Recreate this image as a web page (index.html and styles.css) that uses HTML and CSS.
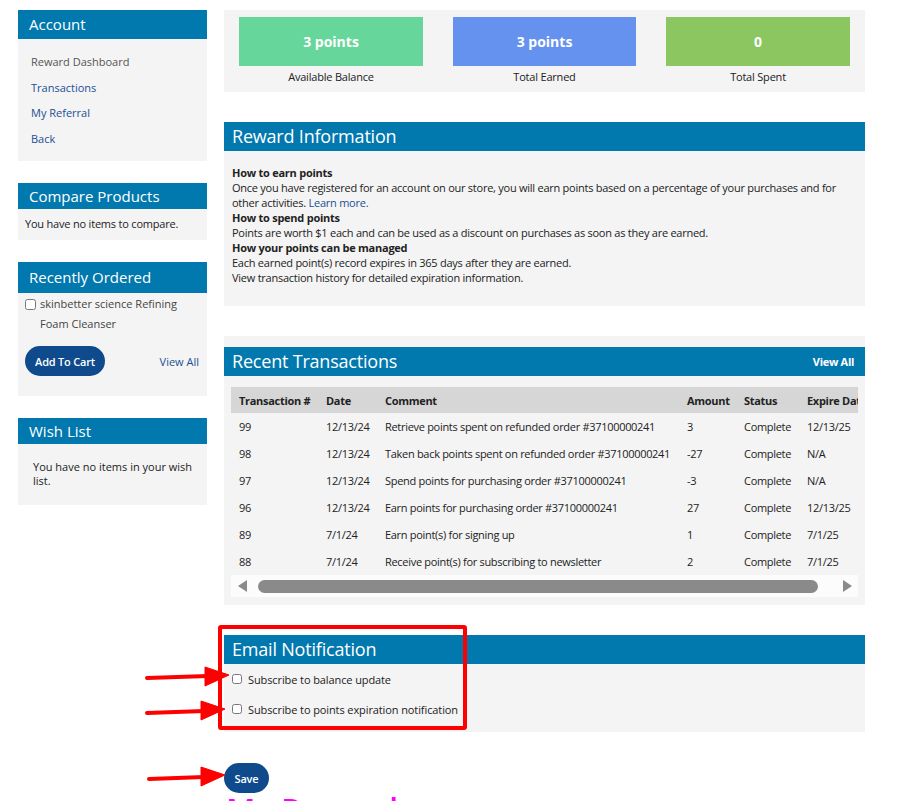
FILE: index.html
```html
<!DOCTYPE html>
<html lang="en">

<head>
    <meta charset="UTF-8">
    <meta name="viewport" content="width=device-width, initial-scale=1.0">
    <title>My Rewards</title>
    <link rel="stylesheet" href="styles.css">
</head>

<body>
    <div class="page">
        <!-- sidebar -->
        <div class="sidebar">
            <div class="block">
                <div class="block-title big">Account</div>
                <ul class="nav">
                    <li class="current">Reward Dashboard</li>
                    <li><a href="#">Transactions</a></li>
                    <li><a href="#">My Referral</a></li>
                    <li><a href="#">Back</a></li>
                </ul>
            </div>
            <div class="block">
                <div class="block-title">Compare Products</div>
                <div class="block-body compare">You have no items to compare.</div>
            </div>
            <div class="block">
                <div class="block-title tall">Recently Ordered</div>
                <div class="block-body ordered">
                    <label class="item"><input type="checkbox"><span>skinbetter science Refining Foam Cleanser</span></label>
                    <div class="actions">
                        <button class="btn">Add To Cart</button>
                        <a href="#">View All</a>
                    </div>
                </div>
            </div>
            <div class="block">
                <div class="block-title">Wish List</div>
                <div class="block-body wish">You have no items in your wish list.</div>
            </div>
        </div>

        <!-- main content -->
        <div class="main">
            <div class="stats">
                <div class="stat">
                    <div class="stat-box green">3 points</div>
                    <div class="stat-label">Available Balance</div>
                </div>
                <div class="stat">
                    <div class="stat-box blue">3 points</div>
                    <div class="stat-label">Total Earned</div>
                </div>
                <div class="stat">
                    <div class="stat-box lime">0</div>
                    <div class="stat-label">Total Spent</div>
                </div>
            </div>

            <div class="panel">
                <div class="panel-title">Reward Information</div>
                <div class="panel-body info">
                    <strong>How to earn points</strong>
                    <p>Once you have registered for an account on our store, you will earn points based on a percentage of your purchases and for other activities. <a href="#">Learn more.</a></p>
                    <strong>How to spend points</strong>
                    <p>Points are worth $1 each and can be used as a discount on purchases as soon as they are earned.</p>
                    <strong>How your points can be managed</strong>
                    <p>Each earned point(s) record expires in 365 days after they are earned.<br>View transaction history for detailed expiration information.</p>
                </div>
            </div>

            <div class="panel trans">
                <div class="panel-title">Recent Transactions <a href="#" class="view-all">View All</a></div>
                <div class="table-wrap">
                    <div class="table-clip">
                        <table>
                            <thead>
                                <tr>
                                    <th class="c1">Transaction #</th>
                                    <th class="c2">Date</th>
                                    <th class="c3">Comment</th>
                                    <th class="c4">Amount</th>
                                    <th class="c5">Status</th>
                                    <th class="c6">Expire Date</th>
                                </tr>
                            </thead>
                            <tbody>
                                <tr><td>99</td><td>12/13/24</td><td>Retrieve points spent on refunded order #37100000241</td><td>3</td><td>Complete</td><td>12/13/25</td></tr>
                                <tr><td>98</td><td>12/13/24</td><td>Taken back points spent on refunded order #37100000241</td><td>-27</td><td>Complete</td><td>N/A</td></tr>
                                <tr><td>97</td><td>12/13/24</td><td>Spend points for purchasing order #37100000241</td><td>-3</td><td>Complete</td><td>N/A</td></tr>
                                <tr><td>96</td><td>12/13/24</td><td>Earn points for purchasing order #37100000241</td><td>27</td><td>Complete</td><td>12/13/25</td></tr>
                                <tr><td>89</td><td>7/1/24</td><td>Earn point(s) for signing up</td><td>1</td><td>Complete</td><td>7/1/25</td></tr>
                                <tr><td>88</td><td>7/1/24</td><td>Receive point(s) for subscribing to newsletter</td><td>2</td><td>Complete</td><td>7/1/25</td></tr>
                            </tbody>
                        </table>
                    </div>
                    <div class="scrollbar">
                        <span class="arrow-left"></span>
                        <span class="thumb"></span>
                        <span class="arrow-right"></span>
                    </div>
                </div>
            </div>

            <div class="panel email">
                <div class="panel-title">Email Notification</div>
                <div class="panel-body checks">
                    <label><input type="checkbox"> Subscribe to balance update</label>
                    <label><input type="checkbox"> Subscribe to points expiration notification</label>
                </div>
                <div class="mark-box"></div>
            </div>

            <button class="btn save">Save</button>
            <h1 class="page-title">My Rewards</h1>
        </div>
    </div>

    <!-- annotation arrows -->
    <svg class="arrows" width="906" height="801" viewBox="0 0 906 801">
        <g fill="#f00" stroke="#f00">
            <line x1="147" y1="678" x2="208" y2="676" stroke-width="4" stroke-linecap="round" />
            <polygon points="205,667 229,675 205,686" stroke-width="1" stroke-linejoin="round" />
            <line x1="147" y1="713" x2="204" y2="711" stroke-width="4" stroke-linecap="round" />
            <polygon points="201,701 225,709 201,720" stroke-width="1" stroke-linejoin="round" />
            <line x1="149" y1="779" x2="204" y2="777" stroke-width="4" stroke-linecap="round" />
            <polygon points="201,767 225,775 201,786" stroke-width="1" stroke-linejoin="round" />
        </g>
    </svg>
</body>

</html>
```

FILE: styles.css
```css
* {
    margin: 0;
    padding: 0;
    box-sizing: border-box;
}

body {
    font-family: "Open Sans", "Liberation Sans", sans-serif;
    font-size: 11px;
    color: #222;
    background: #fff;
    overflow: hidden;
}

a {
    color: #1b4f93;
    text-decoration: none;
}

.page {
    display: flex;
    gap: 17px;
    padding: 10px 0 0 18px;
}

/* sidebar */
.sidebar {
    width: 189px;
    display: flex;
    flex-direction: column;
    gap: 22px;
}

.block {
    background: #f4f4f4;
}

.block-title {
    background: #0178ae;
    color: #fff;
    font-size: 15px;
    height: 26px;
    line-height: 26px;
    padding-left: 11px;
}

.block-title.big {
    height: 29px;
    line-height: 29px;
}

.block-title.tall {
    height: 31px;
    line-height: 31px;
}

.nav {
    list-style: none;
    padding: 10px 0 10px 13px;
}

.nav li {
    line-height: 25.5px;
    color: #555;
}

.block-body {
    color: #222;
}

.compare {
    padding: 8px 7px 9px;
    line-height: 14px;
    letter-spacing: -0.2px;
}

.ordered {
    padding: 1px 7px 20px;
}

.ordered .item {
    display: flex;
    gap: 4px;
    line-height: 20px;
    color: #444;
}

.ordered .item input {
    width: 11px;
    height: 11px;
    margin-top: 5px;
    flex-shrink: 0;
}

.ordered .actions {
    display: flex;
    align-items: center;
    justify-content: space-between;
    margin-top: 12px;
    padding-right: 1px;
}

.btn {
    background: #0e4a8c;
    color: #fff;
    border: none;
    border-radius: 15px;
    height: 30px;
    font-family: inherit;
    font-size: 11px;
    font-weight: 600;
    letter-spacing: -0.2px;
}

.ordered .btn {
    width: 80px;
}

.wish {
    padding: 16px 2px 17px 15px;
    line-height: 14px;
}

/* main */
.main {
    width: 641px;
}

.stats {
    background: #f4f4f4;
    display: grid;
    grid-template-columns: 184px 183px 184px;
    gap: 30px;
    padding: 7px 15px 8px;
}

.stat-box {
    height: 49px;
    line-height: 49px;
    text-align: center;
    color: #fff;
    font-size: 14px;
    font-weight: 700;
}

.green {
    background: #67d69a;
}

.blue {
    background: #6592ef;
}

.lime {
    background: #8bc660;
}

.stat-label {
    text-align: center;
    margin-top: 4px;
    line-height: 14px;
    letter-spacing: -0.2px;
}

.panel {
    background: #f4f4f4;
    margin-top: 30px;
    position: relative;
}

.panel-title {
    background: #0178ae;
    color: #fff;
    font-size: 18px;
    height: 29px;
    line-height: 29px;
    padding: 0 11px 0 8px;
    display: flex;
    justify-content: space-between;
    align-items: center;
    letter-spacing: -0.2px;
}

.view-all {
    color: #fff;
    font-size: 11px;
    font-weight: 700;
    letter-spacing: -0.3px;
}

.info {
    padding: 14px 20px 21px 8px;
    line-height: 15px;
    letter-spacing: -0.25px;
}

.info strong {
    display: block;
    font-weight: 700;
}

.trans {
    padding-top: 11px;
}

.table-wrap {
    padding: 11px 7px 8px;
}

.table-clip {
    overflow: hidden;
}

table {
    border-collapse: collapse;
    width: 700px;
    table-layout: fixed;
    letter-spacing: -0.3px;
}

th {
    background: #d6d6d6;
    text-align: left;
    font-weight: 700;
    height: 26px;
    padding-left: 8px;
    white-space: nowrap;
}

td {
    height: 27px;
    padding-left: 8px;
    white-space: nowrap;
}

.c1 { width: 87px; }
.c2 { width: 59px; }
.c3 { width: 302px; }
.c4 { width: 57px; }
.c5 { width: 63px; }
.c6 { width: 132px; }

.scrollbar {
    background: #fcfcfc;
    height: 22px;
    display: flex;
    align-items: center;
    padding: 0 6px 0 7px;
}

.arrow-left {
    width: 0;
    height: 0;
    border-top: 6px solid transparent;
    border-bottom: 6px solid transparent;
    border-right: 9px solid #8a8a8a;
}

.arrow-right {
    width: 0;
    height: 0;
    border-top: 6px solid transparent;
    border-bottom: 6px solid transparent;
    border-left: 9px solid #8a8a8a;
}

.thumb {
    flex: 1;
    height: 13px;
    background: #8a8a8a;
    border-radius: 7px;
    margin: 0 25px 0 11px;
}

.checks {
    padding: 8px 8px 16px;
    display: flex;
    flex-direction: column;
    gap: 16px;
}

.checks label {
    display: flex;
    align-items: center;
    gap: 6px;
    height: 14px;
    letter-spacing: -0.1px;
}

.checks input {
    width: 10px;
    height: 10px;
    margin: 0;
}

.mark-box {
    position: absolute;
    left: -6px;
    top: -10px;
    width: 249px;
    height: 105px;
    border: 4px solid #f00;
    border-radius: 3px;
}

.save {
    margin-top: 31px;
    width: 45px;
}

.page-title {
    color: #f0f;
    font-size: 32px;
    font-weight: 600;
    line-height: 32px;
    margin-top: 1px;
    padding-left: 2px;
}

.arrows {
    position: absolute;
    left: 0;
    top: 0;
    pointer-events: none;
}
```
